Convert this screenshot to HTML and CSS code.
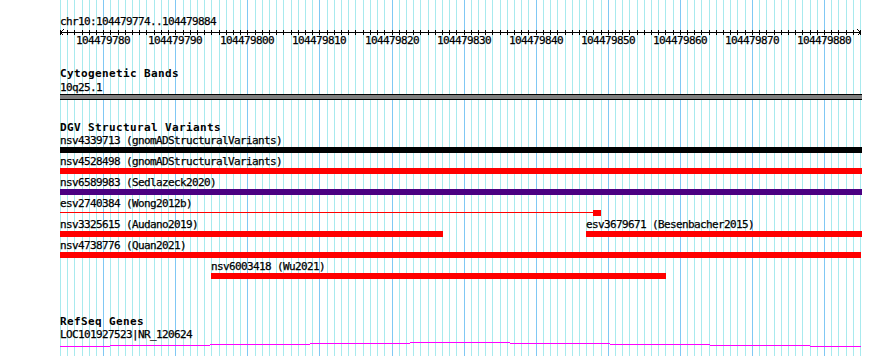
FILE: index.html
```html
<!DOCTYPE html>
<html lang="en">
<head>
    <meta charset="UTF-8">
    <title>chr10:104479774..104479884</title>
    <link rel="stylesheet" href="styles.css">
</head>
<body>

<div class="browser">
    <svg class="grid" id="grid" width="890" height="356"></svg>

    <!-- Ruler -->
    <div class="ruler-title label">chr10:104479774..104479884</div>
    <svg class="scale" id="scale" width="890" height="8">
        <path class="scale-line" d="M60 4.5H861M63.5 1.5L60.5 4.5L63.5 7.5M857.5 1.5L860.5 4.5L857.5 7.5"></path>
    </svg>
    <div class="lane scale-labels">
        <span class="label" style="margin-left:76px">104479780</span>
        <span class="label" style="margin-left:148px">104479790</span>
        <span class="label" style="margin-left:220px">104479800</span>
        <span class="label" style="margin-left:292px">104479810</span>
        <span class="label" style="margin-left:365px">104479820</span>
        <span class="label" style="margin-left:437px">104479830</span>
        <span class="label" style="margin-left:509px">104479840</span>
        <span class="label" style="margin-left:581px">104479850</span>
        <span class="label" style="margin-left:653px">104479860</span>
        <span class="label" style="margin-left:725px">104479870</span>
        <span class="label" style="margin-left:797px">104479880</span>
    </div>

    <!-- Cytogenetic Bands -->
    <section class="track track-cyto">
        <h2 class="track-title">Cytogenetic Bands</h2>
        <div class="lane">
            <div class="feature" style="margin-left:60px;width:802px">
                <div class="label">10q25.1</div>
                <div class="bar band"></div>
            </div>
        </div>
    </section>

    <!-- DGV Structural Variants -->
    <section class="track track-dgv">
        <h2 class="track-title">DGV Structural Variants</h2>
        <div class="lane">
            <div class="feature" style="margin-left:60px;width:802px">
                <div class="label">nsv4339713 (gnomADStructuralVariants)</div>
                <div class="bar black"></div>
            </div>
        </div>
        <div class="lane">
            <div class="feature" style="margin-left:60px;width:802px">
                <div class="label">nsv4528498 (gnomADStructuralVariants)</div>
                <div class="bar red"></div>
            </div>
        </div>
        <div class="lane">
            <div class="feature" style="margin-left:60px;width:802px">
                <div class="label">nsv6589983 (Sedlazeck2020)</div>
                <div class="bar purple"></div>
            </div>
        </div>
        <div class="lane">
            <div class="feature" style="margin-left:60px;width:541px">
                <div class="label">esv2740384 (Wong2012b)</div>
                <div class="split">
                    <div class="split-line"></div>
                    <div class="split-box"></div>
                </div>
            </div>
        </div>
        <div class="lane">
            <div class="feature" style="margin-left:60px;width:383px">
                <div class="label">nsv3325615 (Audano2019)</div>
                <div class="bar red"></div>
            </div>
            <div class="feature" style="margin-left:586px;width:276px">
                <div class="label">esv3679671 (Besenbacher2015)</div>
                <div class="bar red"></div>
            </div>
        </div>
        <div class="lane">
            <div class="feature" style="margin-left:60px;width:801px">
                <div class="label">nsv4738776 (Quan2021)</div>
                <div class="bar red"></div>
            </div>
        </div>
        <div class="lane">
            <div class="feature" style="margin-left:211px;width:455px">
                <div class="label">nsv6003418 (Wu2021)</div>
                <div class="bar red"></div>
            </div>
        </div>
    </section>

    <!-- RefSeq Genes -->
    <section class="track track-refseq">
        <h2 class="track-title">RefSeq Genes</h2>
        <div class="lane">
            <div class="feature" style="margin-left:60px;width:801px">
                <div class="label">LOC101927523|NR_120624</div>
                <svg class="intron" width="801" height="6">
                    <path d="M0 5.5H50M50 4.5H150M150 3.5H250M250 2.5H350M350 1.5H450M450 2.5H550M550 3.5H650M650 4.5H750M750 5.5H801"></path>
                </svg>
            </div>
        </div>
    </section>
</div>

<script>
    // One grid line and one ruler tick per base, 111 bases over 800px
    const NS = 'http://www.w3.org/2000/svg';
    const grid = document.getElementById('grid');
    const scale = document.getElementById('scale');
    const bpWidth = 800 / 111;

    function addLine(svg, x, y1, y2, cls) {
        const line = document.createElementNS(NS, 'line');
        line.setAttribute('x1', x);
        line.setAttribute('x2', x);
        line.setAttribute('y1', y1);
        line.setAttribute('y2', y2);
        line.setAttribute('class', cls);
        svg.appendChild(line);
    }

    for (let k = 0; k <= 111; k++) {
        const x = Math.round(60 + k * bpWidth) + 0.5;
        const major = (k - 6) % 10 === 0;
        addLine(grid, x, 0, 356, major ? 'grid-major' : 'grid-minor');
        addLine(scale, x, 2, 7, 'tick');
    }
</script>

</body>
</html>
```

FILE: styles.css
```css
body {
    margin: 0;
    background: #fff;
    color: #000;
    font-family: "DejaVu Sans Mono", monospace;
}
.browser {
    position: relative;
    z-index: 0;
    width: 890px;
    height: 356px;
    overflow: hidden;
}
.grid {
    position: absolute;
    top: 0;
    left: 0;
    z-index: -1;
    shape-rendering: crispEdges;
}
.grid-minor {
    stroke: #a8eaee;
    stroke-width: 1;
}
.grid-major {
    stroke: #80c8f4;
    stroke-width: 1;
}
.label {
    display: block;
    height: 13px;
    font-size: 11px;
    line-height: 13px;
    letter-spacing: -0.62px;
    white-space: nowrap;
    -webkit-text-stroke: 0.25px #000;
}
.ruler-title {
    margin: 15px 0 0 60px;
}
.scale {
    display: block;
    shape-rendering: crispEdges;
}
.scale-line,
.tick {
    fill: none;
    stroke: #000;
    stroke-width: 1;
}
.scale-labels {
    margin-top: -2px;
}
.lane {
    display: grid;
}
.lane > * {
    grid-area: 1 / 1;
}
.feature {
    height: 21px;
}
.track-title {
    margin: 0 0 0 60px;
    font-size: 11px;
    font-weight: bold;
    line-height: 12px;
    letter-spacing: 0.38px;
}
.track-cyto {
    margin-top: 21px;
}
.track-cyto .lane {
    margin-top: 1px;
}
.track-dgv {
    margin-top: 20px;
}
.track-refseq {
    margin-top: 35px;
}
.bar {
    height: 6px;
}
.band {
    box-sizing: border-box;
    background: #808080;
    border-top: 1px solid #000;
    border-bottom: 1px solid #000;
}
.black {
    background: #000;
}
.red {
    background: #f00;
}
.purple {
    background: #4b0082;
}
.split {
    display: flex;
    height: 6px;
}
.split-line {
    flex: 1;
    height: 1px;
    margin-top: 2px;
    background: #f00;
}
.split-box {
    width: 8px;
    background: #f00;
}
.intron {
    display: block;
    shape-rendering: crispEdges;
}
.intron path {
    fill: none;
    stroke: #f0f;
    stroke-width: 1;
}
```
